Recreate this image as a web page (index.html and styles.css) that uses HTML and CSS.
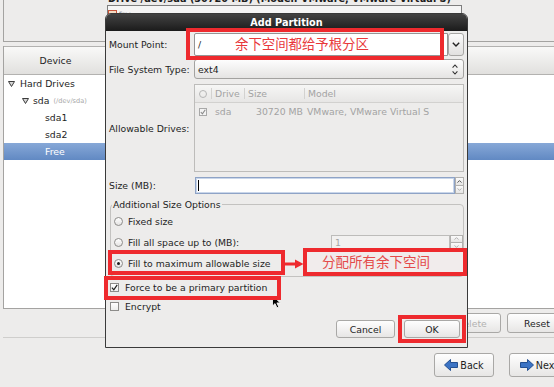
FILE: index.html
```html
<!DOCTYPE html>
<html>
<head>
<meta charset="utf-8">
<title>Add Partition</title>
<link rel="stylesheet" href="styles.css">
</head>
<body>
<div class="screen">
  <div class="window">
    <div class="drive-box">
      <div class="drive-title">Drive /dev/sda (30720 MB) (Model: VMware, VMware Virtual S)</div>
      <div class="drive-bar"><span class="free-icon"></span><span class="free-label">Free</span></div>
    </div>
    <div class="device-tree">
      <div class="tree-head"><div class="head-device">Device</div><div class="head-rest"></div></div>
      <div class="tree-body">
        <div class="trow lvl0"><svg class="exp" width="7" height="6" viewBox="0 0 7 6"><polygon points="0.5,0.5 6.5,0.5 3.5,5.5" fill="#d6d6d6" stroke="#3c3c3c" stroke-width="1"/></svg><span>Hard Drives</span></div>
        <div class="trow lvl1"><svg class="exp" width="7" height="6" viewBox="0 0 7 6"><polygon points="0.5,0.5 6.5,0.5 3.5,5.5" fill="#d6d6d6" stroke="#3c3c3c" stroke-width="1"/></svg><span>sda</span><span class="devpath">(/dev/sda)</span></div>
        <div class="trow lvl2">sda1</div>
        <div class="trow lvl2">sda2</div>
        <div class="trow lvl2 selected">Free</div>
      </div>
    </div>
    <div class="action-row">
      <div class="btn btn-delete disabled">Delete</div>
      <div class="btn btn-reset">Reset</div>
    </div>
    <div class="separator"></div>
    <div class="nav-row">
      <div class="btn btn-nav"><svg class="nav-icon" width="14" height="12" viewBox="0 0 14 12"><polygon points="0.5,6 6.5,0.5 6.5,3.5 13.5,3.5 13.5,8.5 6.5,8.5 6.5,11.5" fill="#3b73c4" stroke="#234f91" stroke-width="1"/></svg><span>Back</span></div>
      <div class="btn btn-nav"><svg class="nav-icon" width="14" height="12" viewBox="0 0 14 12"><polygon points="13.5,6 7.5,0.5 7.5,3.5 0.5,3.5 0.5,8.5 7.5,8.5 7.5,11.5" fill="#3b73c4" stroke="#234f91" stroke-width="1"/></svg><span>Next</span></div>
    </div>
  </div>

  <div class="dialog">
    <div class="dialog-title">Add Partition</div>
    <div class="dialog-body">
      <div class="form-row row-mount">
        <div class="form-label">Mount Point:</div>
        <div class="combo-entry">
          <div class="entry">/</div>
          <div class="combo-btn"><svg width="8" height="5" viewBox="0 0 8 5"><polyline points="0.8,0.8 4,4 7.2,0.8" fill="none" stroke="#222" stroke-width="1.4"/></svg></div>
        </div>
      </div>
      <div class="form-row row-fs">
        <div class="form-label">File System Type:</div>
        <div class="combo-box"><span>ext4</span><svg width="6" height="11" viewBox="0 0 6 11"><polyline points="0.6,3.6 3,1 5.4,3.6" fill="none" stroke="#333" stroke-width="1.1"/><polyline points="0.6,7.4 3,10 5.4,7.4" fill="none" stroke="#333" stroke-width="1.1"/></svg></div>
      </div>
      <div class="form-row row-drives">
        <div class="form-label">Allowable Drives:</div>
        <div class="drives">
          <div class="drives-head">
            <div class="dcell dcell-icon"><span class="hd-circle"></span></div>
            <div class="dcell sep">Drive</div>
            <div class="dcell sep">Size</div>
            <div class="dcell sep">Model</div>
          </div>
          <div class="drives-row">
            <div class="dcell dcell-icon"><span class="mini-check"><svg width="6" height="6" viewBox="0 0 6 6"><polyline points="0.8,3 2.4,4.8 5.3,0.8" fill="none" stroke="#8a8a8a" stroke-width="1.1"/></svg></span></div>
            <div class="dcell">sda</div>
            <div class="dcell dcell-size">30720 MB</div>
            <div class="dcell">VMware, VMware Virtual S</div>
          </div>
        </div>
      </div>
      <div class="form-row row-size">
        <div class="form-label">Size (MB):</div>
        <div class="size-entry"><span class="caret"></span></div>
        <div class="spin-btns small">
          <div class="spin-half"><svg width="5" height="3" viewBox="0 0 5 3"><polyline points="0.5,2.6 2.5,0.6 4.5,2.6" fill="none" stroke="#444" stroke-width="0.9"/></svg></div>
          <div class="spin-half"><svg width="5" height="3" viewBox="0 0 5 3"><polyline points="0.5,0.4 2.5,2.4 4.5,0.4" fill="none" stroke="#aaa" stroke-width="0.9"/></svg></div>
        </div>
      </div>

      <fieldset class="size-options">
        <legend>Additional Size Options</legend>
        <div class="radio-row"><span class="radio"></span><span>Fixed size</span></div>
        <div class="radio-row"><span class="radio"></span><span>Fill all space up to (MB):</span>
          <div class="spin">
            <div class="spin-entry">1</div>
            <div class="spin-btns">
              <div class="spin-half"><svg width="5" height="3" viewBox="0 0 5 3"><polyline points="0.5,2.6 2.5,0.6 4.5,2.6" fill="none" stroke="#aaa" stroke-width="0.9"/></svg></div>
              <div class="spin-half"><svg width="5" height="3" viewBox="0 0 5 3"><polyline points="0.5,0.4 2.5,2.4 4.5,0.4" fill="none" stroke="#aaa" stroke-width="0.9"/></svg></div>
            </div>
          </div>
        </div>
        <div class="radio-row"><span class="radio checked"></span><span>Fill to maximum allowable size</span></div>
      </fieldset>

      <div class="check-row first"><span class="check"><svg width="7" height="7" viewBox="0 0 7 7"><polyline points="0.9,3.6 2.8,5.8 6.2,0.9" fill="none" stroke="#1e1e1e" stroke-width="1.2"/></svg></span><span>Force to be a primary partition</span></div>
      <div class="check-row"><span class="check"></span><span>Encrypt</span></div>

      <div class="dialog-buttons">
        <div class="btn btn-cancel">Cancel</div>
        <div class="btn btn-ok">OK</div>
      </div>
    </div>
  </div>

  <svg class="cursor" width="10" height="14" viewBox="0 0 10 14"><path d="M0.5,0.5 L0.5,11 L3,8.6 L5,12.8 L6.8,12 L4.9,7.9 L8.3,7.9 Z" fill="#000" stroke="#fff" stroke-width="0.8"/></svg>

  <div class="mark mark-mount"><span class="mark-text">余下空间都给予根分区</span></div>
  <div class="mark mark-fillmax"></div>
  <div class="mark mark-primary"></div>
  <svg class="arrow" width="20" height="12" viewBox="0 0 20 12"><line x1="0" y1="6" x2="13" y2="6" stroke="#ee2a2e" stroke-width="3"/><polygon points="11,1.5 19.5,6 11,10.5" fill="#ee2a2e"/></svg>
  <div class="mark mark-note"><span class="mark-text note-text">分配所有余下空间</span></div>
  <div class="mark mark-ok"></div>
</div>
</body>
</html>
```

FILE: styles.css
```css
* { box-sizing: border-box; }
html, body { margin: 0; padding: 0; }
body {
  background: #edeceb;
  font-family: "DejaVu Sans", "Noto Sans CJK SC", sans-serif;
  font-size: 9.3px;
  color: #1e1e1e;
}
.screen { position: relative; width: 554px; height: 387px; overflow: hidden; }
.window { width: 580px; display: flex; flex-direction: column; }

/* drive bar area */
.drive-box {
  height: 42px;
  margin-left: 3px;
  padding-left: 104px;
  border-left: 1px solid #a4a3a1;
  border-bottom: 1px solid #a4a3a1;
}
.drive-title {
  margin-top: -7px;
  height: 11px;
  line-height: 11px;
  font-weight: bold;
  font-size: 9.7px;
  white-space: nowrap;
}
.drive-bar {
  margin-top: 1px;
  margin-left: -1px;
  width: 355px;
  height: 30px;
  border: 1px solid #7e7e7e;
  background: #f5f5f5;
  display: flex;
  align-items: flex-start;
  gap: 2px;
  padding: 4px 0 0 0;
}
.free-icon { width: 9px; height: 8px; border: 1px solid #c8553a; background: #f4dcc4; }
.free-label { font-size: 6px; line-height: 8px; color: #555; }

/* device tree */
.device-tree {
  margin: 4px 0 0 3px;
  height: 263px;
  border-left: 1px solid #a4a3a1;
  border-bottom: 1px solid #a4a3a1;
  display: flex;
  flex-direction: column;
}
.tree-head {
  height: 29px;
  flex: none;
  display: flex;
  background: linear-gradient(#f9f9f8, #e1e0de);
  border-top: 1px solid #b3b2b0;
  border-bottom: 1px solid #b3b2b0;
}
.head-device {
  width: 104px;
  display: flex;
  align-items: center;
  justify-content: center;
  border-right: 1px solid #d0cfcd;
}
.tree-body { flex: 1; background: #fff; }
.trow { height: 17px; display: flex; align-items: center; white-space: nowrap; }
.lvl0 { padding-left: 4px; }
.lvl1 { padding-left: 18px; }
.lvl2 { padding-left: 41px; }
.lvl0 .exp { margin-right: 5px; }
.lvl1 .exp { margin-right: 4px; }
.devpath { margin-left: 4px; font-size: 6.6px; color: #a9a9a9; }
.selected { background: linear-gradient(#87a8d7, #6189c3); color: #fff; }

/* buttons */
.btn {
  display: flex;
  align-items: center;
  justify-content: center;
  border: 1px solid #a9a8a6;
  border-radius: 3px;
  background: linear-gradient(#fefefe, #e7e6e5);
  white-space: nowrap;
}
.disabled { color: #b2b1b0; }
.action-row {
  margin-top: 4px;
  height: 20px;
  display: flex;
  justify-content: flex-end;
  gap: 6px;
  padding-right: 13px;
}
.btn-delete { width: 59px; }
.btn-reset { width: 60px; }
.separator { margin: 4px 0 0 3px; height: 1px; background: #cfcecc; }
.nav-row {
  margin-top: 15px;
  height: 24px;
  display: flex;
  justify-content: flex-end;
  gap: 15px;
  padding-right: 11px;
}
.btn-nav { width: 60px; gap: 2px; font-size: 9.6px; }

/* dialog */
.dialog {
  position: absolute;
  left: 105px;
  top: 13px;
  width: 363px;
  height: 335px;
  border: 1px solid #3a3a3a;
  border-radius: 6px 6px 0 0;
  background: #edeceb;
  display: flex;
  flex-direction: column;
  overflow: hidden;
}
.dialog-title {
  height: 17px;
  flex: none;
  background: linear-gradient(#434343, #1b1b1b);
  color: #fff;
  font-weight: bold;
  font-size: 9.7px;
  line-height: 17px;
  text-align: center;
}
.dialog-body { flex: 1; padding: 0 3px; display: flex; flex-direction: column; }
.form-row { display: flex; align-items: center; flex: none; }
.form-label { width: 85px; flex: none; white-space: nowrap; }
.row-mount { height: 23px; margin-top: 2px; }
.row-fs { height: 20px; margin-top: 3px; }
.row-drives { height: 88px; margin-top: 5px; }
.row-size { height: 17px; margin-top: 5px; }

.combo-entry { flex: 1; height: 23px; display: flex; }
.entry {
  flex: 1;
  background: #fff;
  border: 1px solid #959595;
  border-radius: 2px 0 0 2px;
  padding-left: 3px;
  display: flex;
  align-items: center;
}
.combo-btn {
  width: 16px;
  border: 1px solid #a8a7a5;
  border-radius: 3px;
  background: linear-gradient(#fbfbfb, #e2e1e0);
  display: flex;
  align-items: center;
  justify-content: center;
}
.combo-box {
  flex: 1;
  height: 20px;
  border: 1px solid #a3a2a0;
  border-radius: 3px;
  background: linear-gradient(#fdfdfd, #e5e4e3);
  display: flex;
  align-items: center;
  justify-content: space-between;
  padding: 0 5px 0 3px;
}

.drives { flex: 1; height: 88px; border: 1px solid #bdbcba; background: #edeceb; color: #a3a3a3; }
.drives-head, .drives-row { display: grid; grid-template-columns: 16px 33px 60px 1fr; }
.drives-head { height: 18px; background: linear-gradient(#f6f6f5, #e7e6e5); border-bottom: 1px solid #d2d1cf; }
.drives-row { height: 17px; }
.dcell { display: flex; align-items: center; padding-left: 4px; white-space: nowrap; overflow: hidden; }
.drives-head .dcell.sep { border-left: 1px solid #d3d2d0; margin: 3px 0; padding-left: 3px; }
.drives-row .dcell:last-child { padding-left: 3px; }
.dcell-size { padding-left: 12px; }
.dcell-icon { padding-left: 4px; }
.hd-circle { width: 8px; height: 8px; border: 1px solid #b5b5b5; border-radius: 50%; }
.mini-check {
  width: 8px; height: 8px;
  border: 1px solid #a8a8a8;
  background: #f3f3f3;
  display: flex; align-items: center; justify-content: center;
}

.size-entry {
  margin-left: 1px;
  width: 260px;
  height: 17px;
  background: #fff;
  border: 1px solid #8ea3c6;
  box-shadow: inset 0 0 0 1px #c9d6ea;
  display: flex;
  align-items: center;
  padding-left: 2px;
}
.caret { width: 1px; height: 11px; background: #000; }
.spin-btns { width: 9px; display: flex; flex-direction: column; }
.spin-btns.small { height: 17px; }
.spin-half {
  flex: 1;
  border: 1px solid #b2b1af;
  background: linear-gradient(#fbfbfb, #e6e5e4);
  display: flex; align-items: center; justify-content: center;
}
.spin-half + .spin-half { border-top: none; }

.size-options {
  margin: 5px 0 0 1px;
  padding: 1px 0 2px 0;
  border: 1px solid #c3c2c0;
  border-radius: 4px;
  min-width: 0;
}
.size-options legend { padding: 0 1px; margin-left: 1px; line-height: 11px; }
.radio-row { height: 21px; display: flex; align-items: center; padding-left: 3px; gap: 5px; white-space: nowrap; }
.radio {
  width: 9px; height: 9px; flex: none;
  border: 1px solid #8d8c8a;
  border-radius: 50%;
  background: linear-gradient(#ffffff, #e4e3e2);
  display: flex; align-items: center; justify-content: center;
}
.radio.checked::after { content: ""; width: 3px; height: 3px; border-radius: 50%; background: #1e1e1e; }
.spin { margin-left: auto; height: 16px; display: flex; }
.spin-entry {
  width: 119px;
  border: 1px solid #bdbcba;
  background: #f2f1f0;
  color: #a5a5a5;
  padding-left: 3px;
  display: flex;
  align-items: center;
}
.spin .spin-btns { width: 13px; }

.check-row { height: 19px; display: flex; align-items: center; padding-left: 1px; gap: 6px; white-space: nowrap; }
.check-row.first { margin-top: 1px; }
.check {
  width: 9px; height: 9px; flex: none;
  border: 1px solid #8d8c8a;
  background: linear-gradient(#ffffff, #eeeeed);
  display: flex; align-items: center; justify-content: center;
}

.dialog-buttons { margin-top: 4px; height: 18px; display: flex; justify-content: flex-end; gap: 9px; padding-right: 4px; }
.btn-cancel { width: 59px; }
.btn-ok { width: 56px; }

/* screenshot annotations */
.cursor { position: absolute; left: 272px; top: 295px; }
.mark { position: absolute; border: 4px solid #ee2a2e; }
.mark-mount { left: 186px; top: 28px; width: 258px; height: 32px; display: flex; align-items: center; padding-left: 45px; }
.mark-text {
  font-family: "Noto Sans CJK SC", sans-serif;
  font-size: 13.4px;
  line-height: 1;
  color: #e8383b;
  white-space: nowrap;
}
.note-text { font-size: 13.5px; color: #e44a4a; }
.mark-fillmax { left: 108px; top: 250px; width: 177px; height: 25px; }
.mark-primary { left: 104px; top: 276px; width: 177px; height: 24px; }
.arrow { position: absolute; left: 284px; top: 258px; }
.mark-note { left: 303px; top: 248px; width: 164px; height: 28px; background: #f1ecec; display: flex; align-items: center; padding-left: 15px; }
.mark-ok { left: 398px; top: 315px; width: 68px; height: 28px; }
```
